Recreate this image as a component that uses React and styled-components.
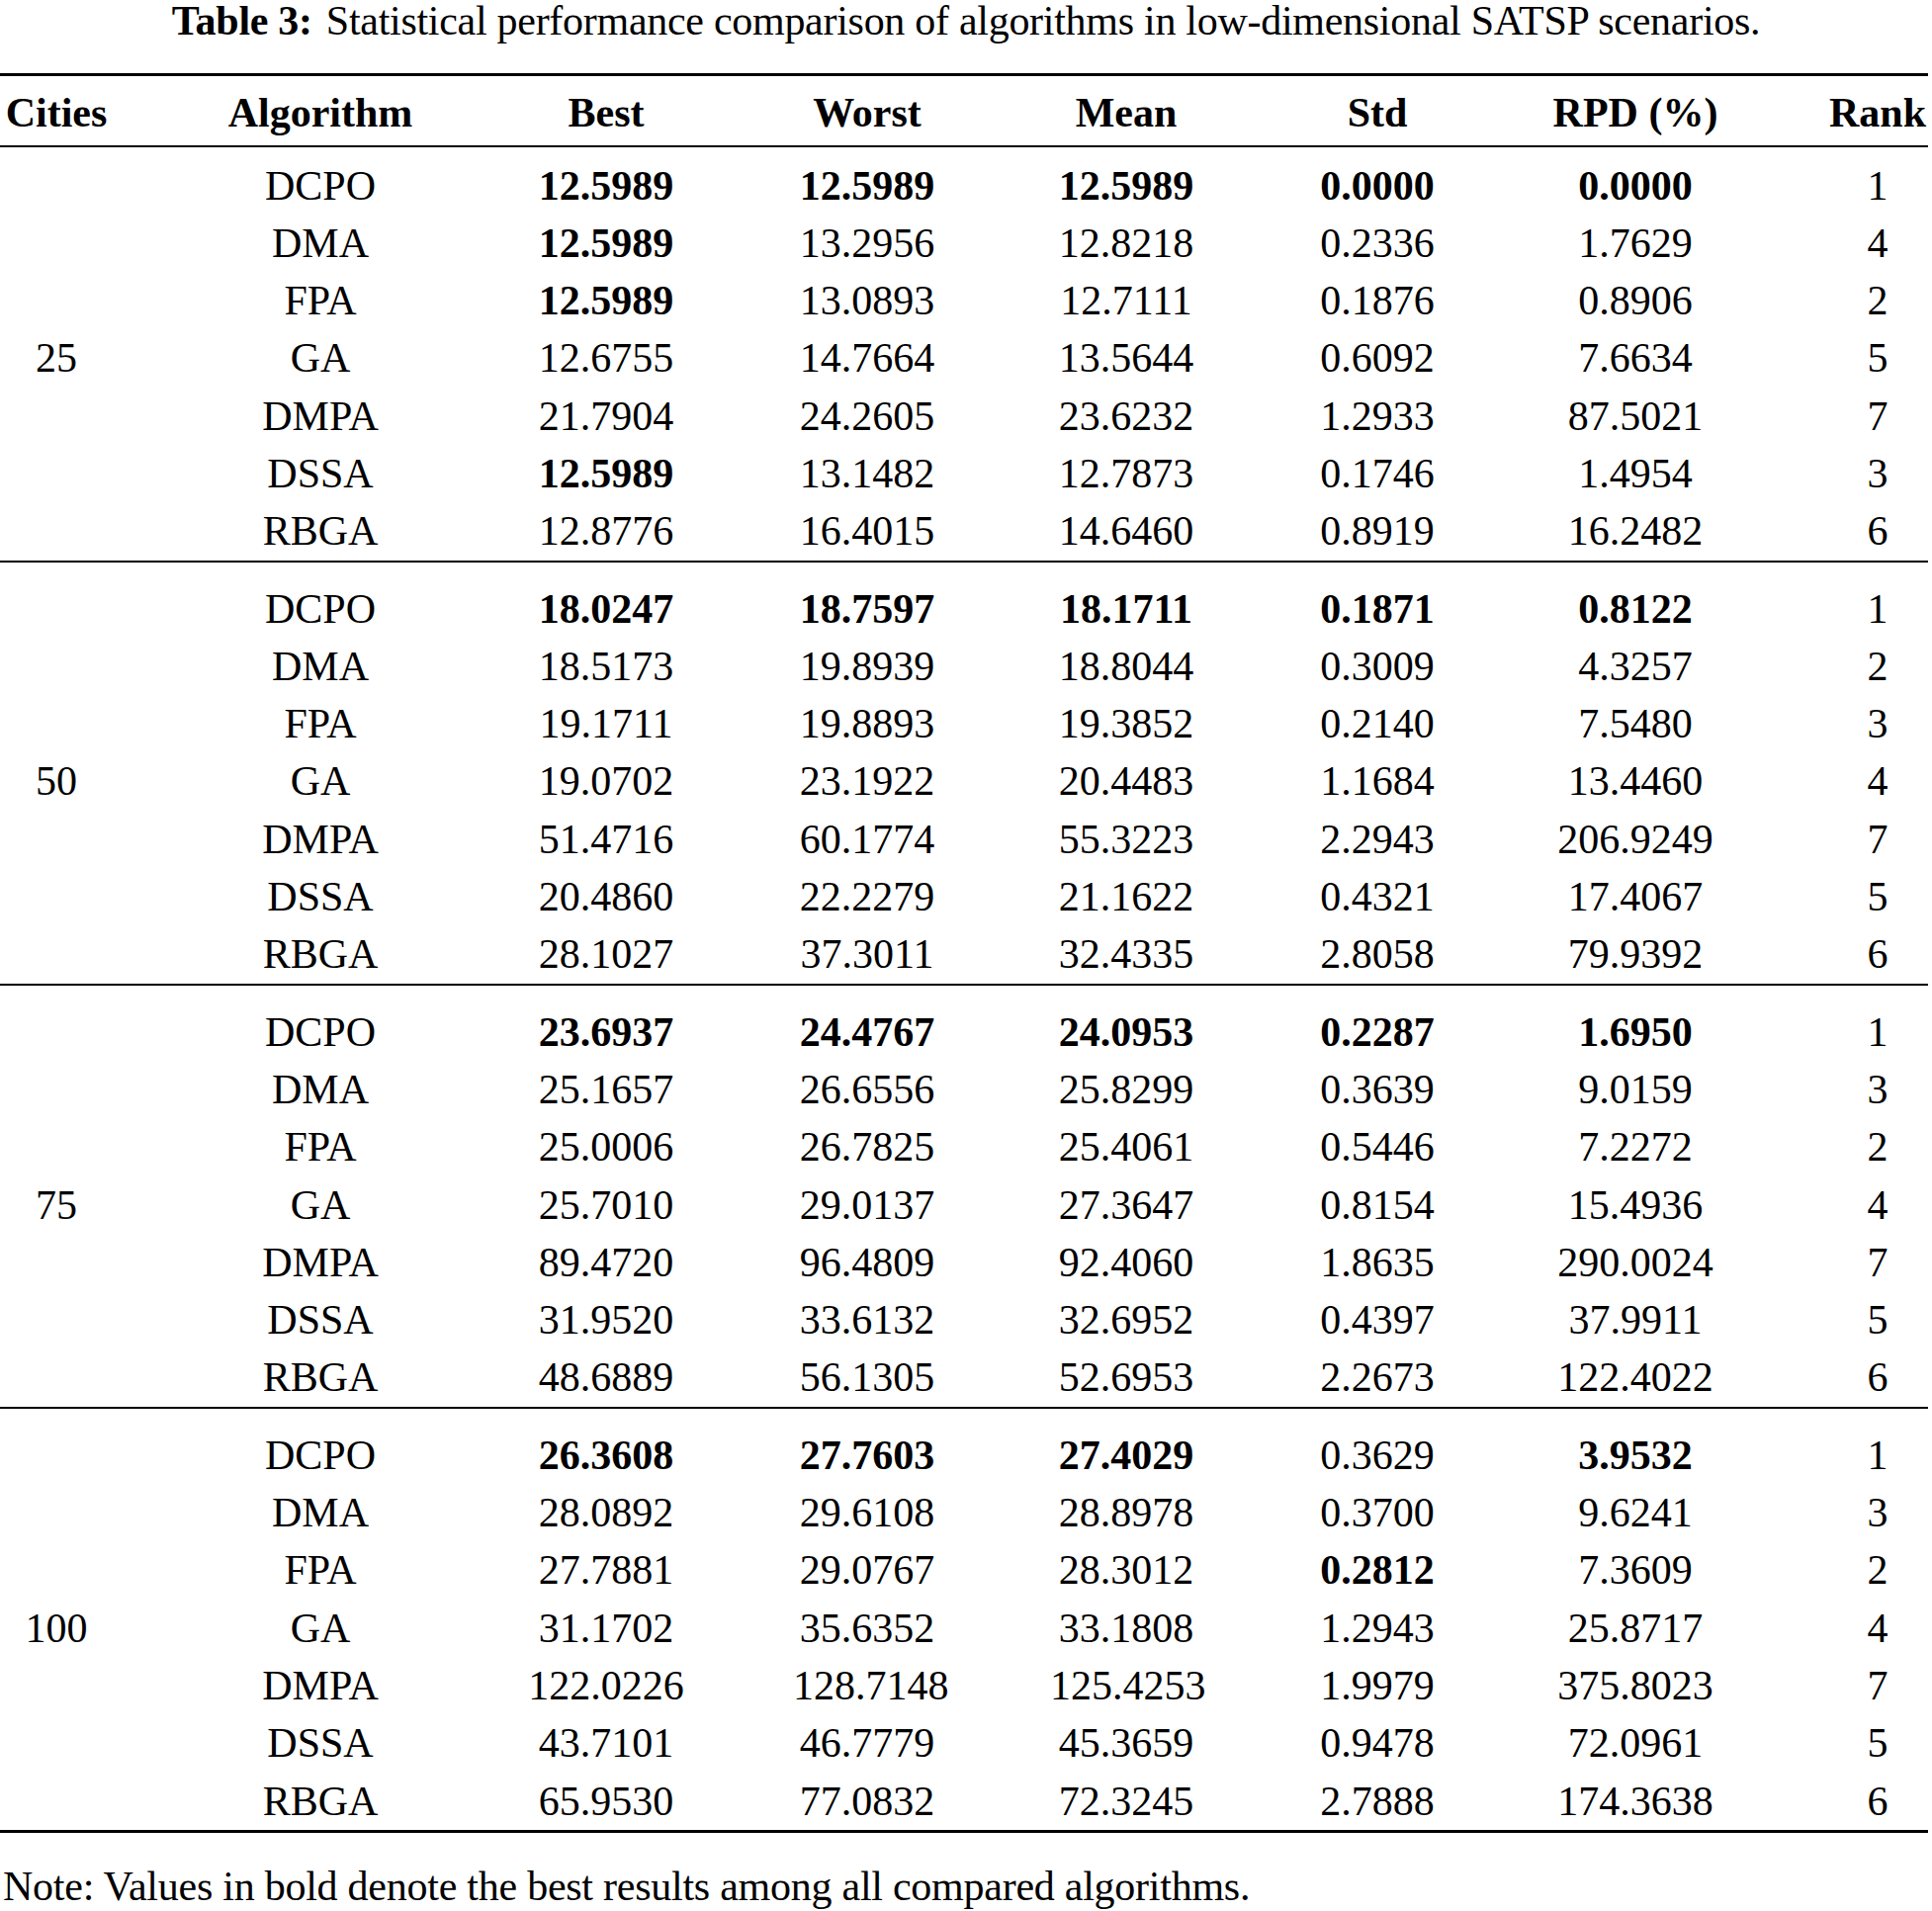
import React from "react";
import styled, { createGlobalStyle } from "styled-components";

const GlobalStyle = createGlobalStyle`
  html, body {
    margin: 0;
    padding: 0;
    background: #ffffff;
  }
  body {
    font-family: "Liberation Serif", "Times New Roman", serif;
    color: #000000;
  }
`;

const Page = styled.div`
  width: 1954px;
  font-size: 42px;
`;

const Caption = styled.div`
  text-align: center;
  line-height: 43px;
  margin-bottom: 30.5px;
  white-space: nowrap;
  letter-spacing: -0.28px;
`;

const CaptionLabel = styled.span`
  font-weight: 700;
  margin-right: 14px;
`;

const Table = styled.div`
  width: 1950px;
  border-top: 3px solid #000;
`;

const columns = "114px 200px 158px 150px 154px 134px 168px 102px";

const HeaderRow = styled.div`
  display: grid;
  grid-template-columns: ${columns};
  column-gap: 110px;
  padding: 8px 0 4px;
  line-height: 58px;
  border-bottom: 2px solid #000;
`;

const HeaderCell = styled.div`
  text-align: center;
  font-weight: 700;
  white-space: nowrap;
`;

const Section = styled.div`
  display: grid;
  grid-template-columns: ${columns};
  grid-auto-rows: 58.3px;
  column-gap: 110px;
  padding-top: ${(p) => p.$padTop}px;
  line-height: 58.3px;
  border-bottom: ${(p) => (p.$last ? 3 : 2)}px solid #000;
`;

const CitiesCell = styled.div`
  grid-column: 1;
  grid-row: 1 / span 7;
  align-self: center;
  text-align: center;
`;

const Cell = styled.div`
  grid-column: ${(p) => p.$col};
  text-align: center;
  white-space: nowrap;
  font-weight: ${(p) => (p.$bold ? 700 : 400)};
`;

const Note = styled.div`
  margin-top: 25px;
  padding-left: 3px;
  line-height: 58.3px;
  white-space: nowrap;
  letter-spacing: -0.25px;
`;

const headers = ["Cities", "Algorithm", "Best", "Worst", "Mean", "Std", "RPD (%)", "Rank"];

// a leading "*" marks a bold (best) value
const data = [
  {
    cities: "25",
    rows: [
      ["DCPO", "*12.5989", "*12.5989", "*12.5989", "*0.0000", "*0.0000", "1"],
      ["DMA", "*12.5989", "13.2956", "12.8218", "0.2336", "1.7629", "4"],
      ["FPA", "*12.5989", "13.0893", "12.7111", "0.1876", "0.8906", "2"],
      ["GA", "12.6755", "14.7664", "13.5644", "0.6092", "7.6634", "5"],
      ["DMPA", "21.7904", "24.2605", "23.6232", "1.2933", "87.5021", "7"],
      ["DSSA", "*12.5989", "13.1482", "12.7873", "0.1746", "1.4954", "3"],
      ["RBGA", "12.8776", "16.4015", "14.6460", "0.8919", "16.2482", "6"],
    ],
  },
  {
    cities: "50",
    rows: [
      ["DCPO", "*18.0247", "*18.7597", "*18.1711", "*0.1871", "*0.8122", "1"],
      ["DMA", "18.5173", "19.8939", "18.8044", "0.3009", "4.3257", "2"],
      ["FPA", "19.1711", "19.8893", "19.3852", "0.2140", "7.5480", "3"],
      ["GA", "19.0702", "23.1922", "20.4483", "1.1684", "13.4460", "4"],
      ["DMPA", "51.4716", "60.1774", "55.3223", "2.2943", "206.9249", "7"],
      ["DSSA", "20.4860", "22.2279", "21.1622", "0.4321", "17.4067", "5"],
      ["RBGA", "28.1027", "37.3011", "32.4335", "2.8058", "79.9392", "6"],
    ],
  },
  {
    cities: "75",
    rows: [
      ["DCPO", "*23.6937", "*24.4767", "*24.0953", "*0.2287", "*1.6950", "1"],
      ["DMA", "25.1657", "26.6556", "25.8299", "0.3639", "9.0159", "3"],
      ["FPA", "25.0006", "26.7825", "25.4061", "0.5446", "7.2272", "2"],
      ["GA", "25.7010", "29.0137", "27.3647", "0.8154", "15.4936", "4"],
      ["DMPA", "89.4720", "96.4809", "92.4060", "1.8635", "290.0024", "7"],
      ["DSSA", "31.9520", "33.6132", "32.6952", "0.4397", "37.9911", "5"],
      ["RBGA", "48.6889", "56.1305", "52.6953", "2.2673", "122.4022", "6"],
    ],
  },
  {
    cities: "100",
    rows: [
      ["DCPO", "*26.3608", "*27.7603", "*27.4029", "0.3629", "*3.9532", "1"],
      ["DMA", "28.0892", "29.6108", "28.8978", "0.3700", "9.6241", "3"],
      ["FPA", "27.7881", "29.0767", "28.3012", "*0.2812", "7.3609", "2"],
      ["GA", "31.1702", "35.6352", "33.1808", "1.2943", "25.8717", "4"],
      ["DMPA", "122.0226", "128.7148", "125.4253", "1.9979", "375.8023", "7"],
      ["DSSA", "43.7101", "46.7779", "45.3659", "0.9478", "72.0961", "5"],
      ["RBGA", "65.9530", "77.0832", "72.3245", "2.7888", "174.3638", "6"],
    ],
  },
];

export default function App() {
  return (
    <>
      <GlobalStyle />
      <Page>
        <Caption>
          <CaptionLabel>Table 3:</CaptionLabel>
          Statistical performance comparison of algorithms in low-dimensional SATSP scenarios.
        </Caption>
        <Table>
          <HeaderRow>
            {headers.map((h) => (
              <HeaderCell key={h}>{h}</HeaderCell>
            ))}
          </HeaderRow>
          {data.map((sec, si) => (
            <Section key={sec.cities} $padTop={si === 0 ? 10 : 18} $last={si === data.length - 1}>
              <CitiesCell>{sec.cities}</CitiesCell>
              {sec.rows.map((row) =>
                row.map((v, ci) => {
                  const bold = v.startsWith("*");
                  return (
                    <Cell key={row[0] + ci} $col={ci + 2} $bold={bold}>
                      {bold ? v.slice(1) : v}
                    </Cell>
                  );
                })
              )}
            </Section>
          ))}
        </Table>
        <Note>Note: Values in bold denote the best results among all compared algorithms.</Note>
      </Page>
    </>
  );
}
